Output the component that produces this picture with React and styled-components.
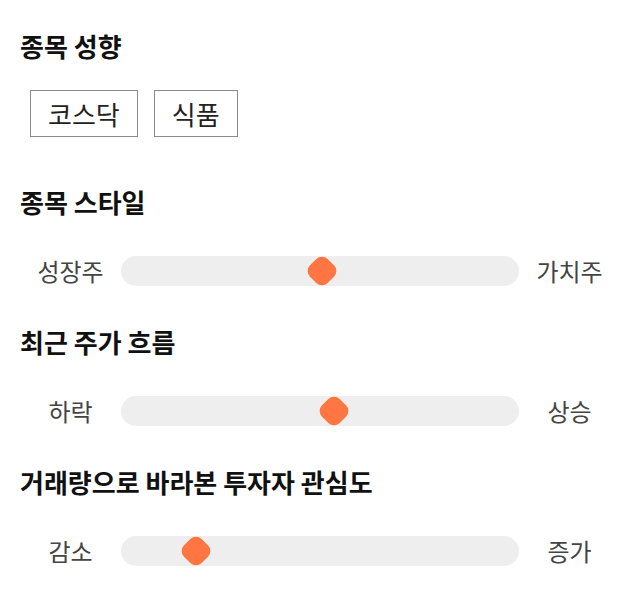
import React from "react";
import styled, { createGlobalStyle } from "styled-components";

const GlobalStyle = createGlobalStyle`
  html, body {
    margin: 0;
    padding: 0;
    background: #ffffff;
  }
  body {
    font-family: "Noto Sans CJK KR", "Noto Sans", sans-serif;
  }
`;

const Page = styled.div`
  width: 640px;
  padding: 30px 20px 0 20px;
  box-sizing: border-box;
`;

const Section = styled.section`
  display: flex;
  flex-direction: column;
  margin-top: ${(p) => (p.$first ? "0" : p.$afterTags ? "49px" : "40px")};
`;

const Heading = styled.h2`
  margin: 0;
  font-size: 26px;
  line-height: 32px;
  font-weight: 700;
  color: #111111;
`;

const TagRow = styled.div`
  display: flex;
  gap: 16px;
  margin: 28px 0 0 10px;
`;

const Tag = styled.button`
  height: 47px;
  padding: 0 17px;
  border: 1px solid #8a8a8a;
  background: #ffffff;
  font-family: inherit;
  font-size: 26px;
  color: #222222;
  cursor: pointer;
`;

const SliderRow = styled.div`
  display: grid;
  grid-template-columns: 101px 398px 101px;
  align-items: center;
  margin-top: 38px;
  height: 30px;
`;

const SideLabel = styled.span`
  text-align: center;
  font-size: 24px;
  line-height: 30px;
  color: #444444;
`;

const Track = styled.div`
  position: relative;
  height: 30px;
  border-radius: 15px;
  background: #eeeeee;
`;

const Thumb = styled.div`
  position: absolute;
  top: 50%;
  width: 25px;
  height: 25px;
  border-radius: 8px;
  background: #ff7642;
  transform: translate(-50%, -50%) rotate(45deg);
`;

const sliders = [
  { title: "종목 스타일", left: "성장주", right: "가치주", value: 50.5 },
  { title: "최근 주가 흐름", left: "하락", right: "상승", value: 53.5 },
  { title: "거래량으로 바라본 투자자 관심도", left: "감소", right: "증가", value: 18.8 },
];

const tags = ["코스닥", "식품"];

export default function App() {
  return (
    <>
      <GlobalStyle />
      <Page>
        <Section $first>
          <Heading>종목 성향</Heading>
          <TagRow>
            {tags.map((t) => (
              <Tag key={t}>{t}</Tag>
            ))}
          </TagRow>
        </Section>
        {sliders.map((s, i) => (
          <Section key={s.title} $afterTags={i === 0}>
            <Heading>{s.title}</Heading>
            <SliderRow>
              <SideLabel>{s.left}</SideLabel>
              <Track>
                <Thumb style={{ left: `${s.value}%` }} />
              </Track>
              <SideLabel>{s.right}</SideLabel>
            </SliderRow>
          </Section>
        ))}
      </Page>
    </>
  );
}
